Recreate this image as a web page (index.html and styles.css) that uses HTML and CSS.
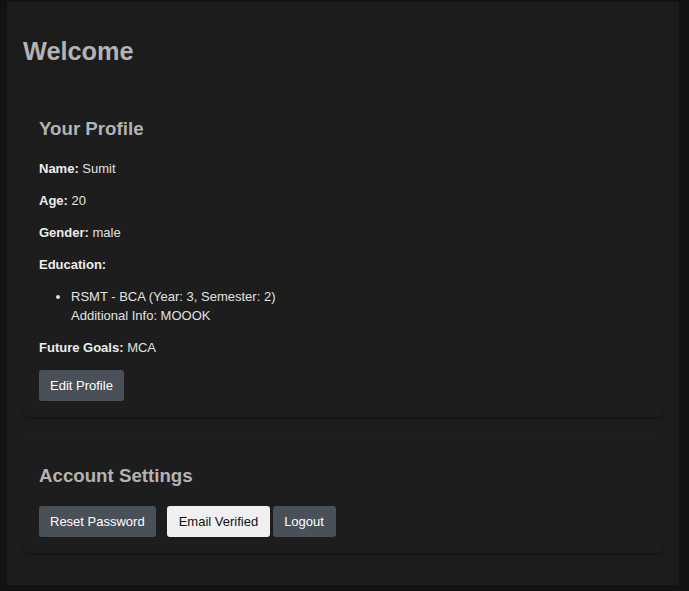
FILE: index.html
```html
<!DOCTYPE html>
<html>
<head>
<meta charset="utf-8">
<link rel="stylesheet" href="styles.css">
</head>
<body>
<div class="container">
  <h1 class="title">Welcome</h1>
  <section class="card">
    <h2 class="card-title">Your Profile</h2>
    <p class="field"><strong>Name:</strong> Sumit</p>
    <p class="field"><strong>Age:</strong> 20</p>
    <p class="field"><strong>Gender:</strong> male</p>
    <p class="field"><strong>Education:</strong></p>
    <ul class="edu-list">
      <li>RSMT - BCA (Year: 3, Semester: 2)<br>Additional Info: MOOOK</li>
    </ul>
    <p class="field"><strong>Future Goals:</strong> MCA</p>
    <button class="btn">Edit Profile</button>
  </section>
  <section class="card">
    <h2 class="card-title">Account Settings</h2>
    <div class="actions">
      <button class="btn btn-reset">Reset Password</button>
      <button class="btn btn-light">Email Verified</button>
      <button class="btn btn-logout">Logout</button>
    </div>
  </section>
</div>
</body>
</html>
```

FILE: styles.css
```css
html, body {
  margin: 0;
  padding: 0;
  background: #121212;
}
body {
  padding: 2px 10px 6px 7px;
  font-family: "Liberation Sans", Arial, sans-serif;
  color: #e2e2e2;
  font-size: 13px;
}
.container {
  background: #1c1c1c;
  padding: 16px;
  box-sizing: border-box;
  height: 583px;
}
.title {
  margin: 18px 0 20px 0;
  font-size: 25.3px;
  line-height: 30px;
  color: #b3b3b3;
  font-weight: bold;
}
.card {
  background: #1d1d1d;
  border-radius: 6px;
  padding: 16px;
  margin-bottom: 16px;
  box-shadow: 0 1px 3px rgba(0,0,0,0.6), 0 0 0 1px #232323;
}
.card-title {
  margin: 16px 0 19px 0;
  font-size: 18.7px;
  line-height: 22px;
  color: #b3b3b3;
  font-weight: bold;
}
.field {
  margin: 0 0 13px 0;
  line-height: 19px;
}
.field strong {
  color: #ececec;
}
.edu-list {
  margin: 0 0 13px 0;
  padding-left: 32px;
  line-height: 19px;
}
.btn {
  font-family: "Liberation Sans", Arial, sans-serif;
  font-size: 13px;
  line-height: 15px;
  padding: 8px 11px;
  border: none;
  border-radius: 3px;
  background: #4a5058;
  color: #ffffff;
  display: block;
}
.actions {
  display: flex;
  gap: 3px;
}
.btn-reset {
  margin-right: 8px;
}
.btn-light {
  background: #f0f0f0;
  color: #111111;
  padding: 8px 12px;
}
.btn-logout {
  padding: 8px 12px 8px 11px;
}
```
